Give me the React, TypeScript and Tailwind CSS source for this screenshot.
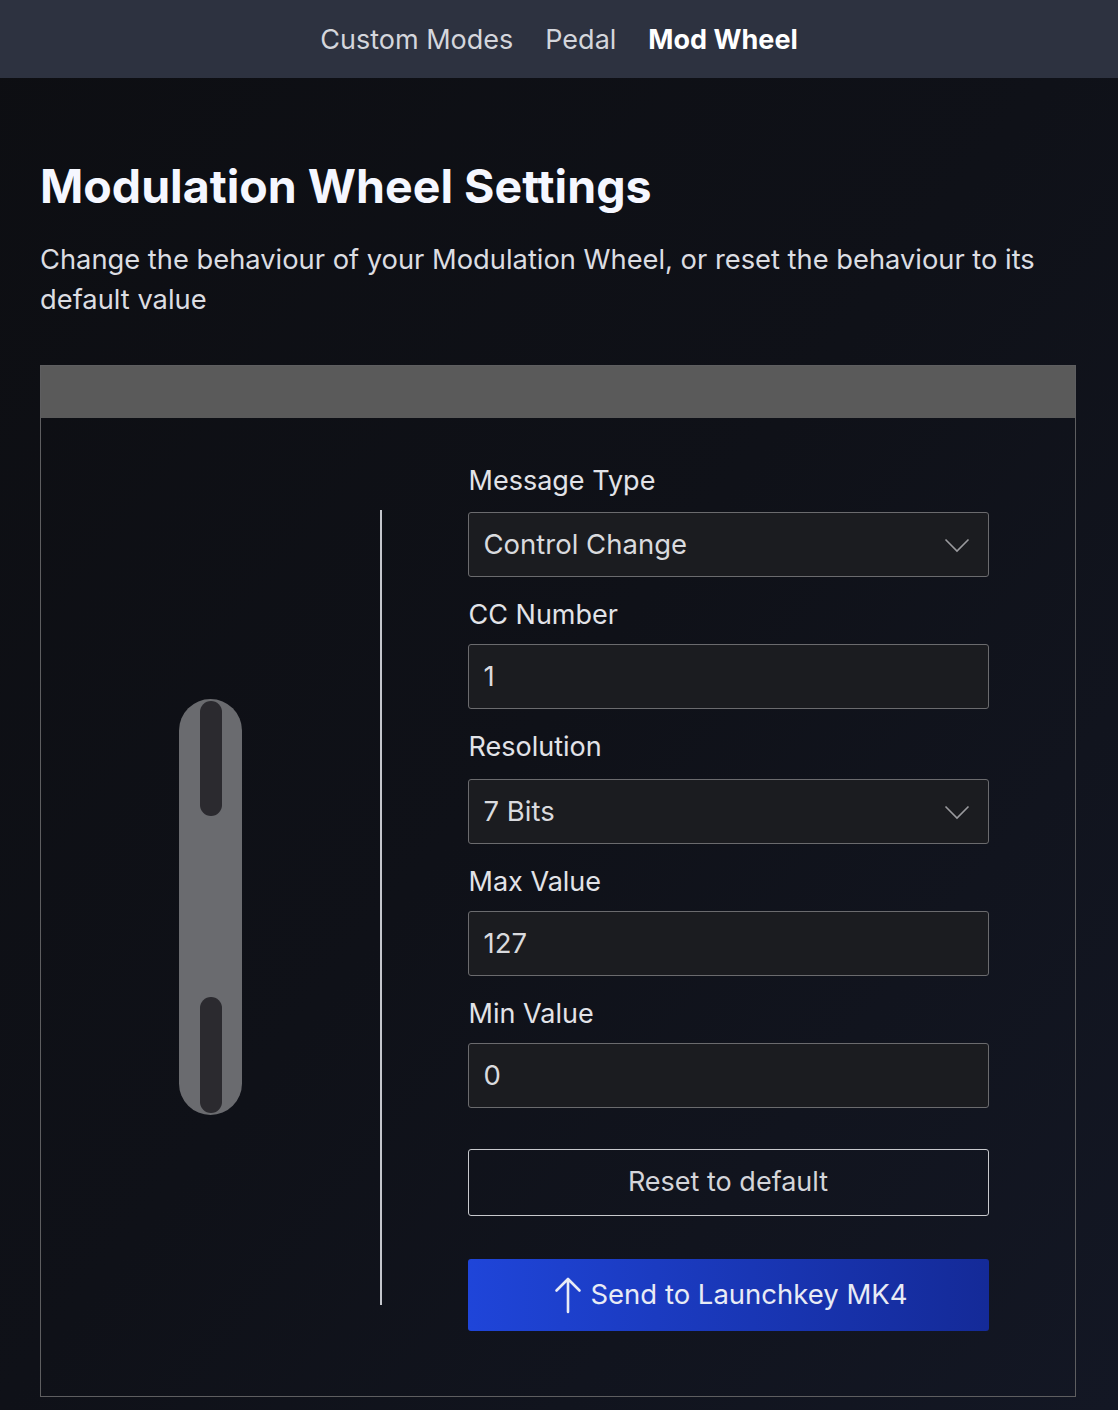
import React from "react";

const Chevron = () => (
  <svg width="26" height="16" viewBox="0 0 26 16" fill="none" stroke="#9a9a9e" strokeWidth="1.6">
    <path d="M1.5 2.5 L13 14 L24.5 2.5" />
  </svg>
);

function Field({ label, value, select, mb }: { label: string; value: string; select?: boolean; mb: string }) {
  return (
    <div className="flex flex-col">
      <div className={"text-[27px] leading-[34px] text-[#e2e3e8] pl-[1px] " + mb}>{label}</div>
      <div className="h-[65px] border border-[#6b6b6e] rounded-[3px] bg-[#1b1c20] flex items-center justify-between pl-[15px] pr-[18px]">
        <span className="text-[27.5px] text-[#d9dade]">{value}</span>
        {select && <Chevron />}
      </div>
    </div>
  );
}

export default function App() {
  return (
    <div
      className="min-h-[1410px] w-full bg-gradient-to-br from-[#0d0e12] via-[#0f1118] to-[#131724]"
      style={{ fontFamily: "Inter, 'Noto Sans', sans-serif" }}
    >
      <nav className="h-[78px] bg-[#2d3240] flex items-center justify-center gap-[32px] text-[27px] pt-[3px]">
        <span className="text-[#d4d6dc]">Custom Modes</span>
        <span className="text-[#d4d6dc]">Pedal</span>
        <span className="text-white font-bold">Mod Wheel</span>
      </nav>

      <div className="pl-[40px] pr-[42px] pt-[78px]">
        <h1 className="text-[46.5px] leading-[60px] font-bold text-[#f5f7ff]">Modulation Wheel Settings</h1>
        <p className="mt-[24px] text-[27.3px] leading-[40px] text-[#dcdde2]">
          Change the behaviour of your Modulation Wheel, or reset the behaviour to its default value
        </p>

        <div className="mt-[45px] border-[1.5px] border-[#5e5e60]">
          <div className="h-[52px] bg-[#5a5a5a]" />
          <div className="flex">
            <div className="w-[339px] flex items-center justify-center">
              <div className="w-[63px] h-[416px] rounded-full bg-[#6a6b6f] flex flex-col items-center justify-between py-[2px]">
                <div className="w-[22px] h-[115px] rounded-full bg-[#2b2a2f]" />
                <div className="w-[22px] h-[116px] rounded-full bg-[#2b2a2f]" />
              </div>
            </div>
            <div className="mt-[92px] mb-[91px] w-[1.5px] bg-[#c4c6cc]" />
            <div className="ml-[86px] w-[521px] flex flex-col gap-[21px] pt-[46px] pb-[65px]">
              <Field label="Message Type" value="Control Change" select mb="mb-[14px]" />
              <Field label="CC Number" value="1" mb="mb-[12px]" />
              <Field label="Resolution" value="7 Bits" select mb="mb-[15px]" />
              <Field label="Max Value" value="127" mb="mb-[12px]" />
              <Field label="Min Value" value="0" mb="mb-[12px]" />
              <button className="mt-[20px] h-[67px] border border-[#c8c9cd] rounded-[3px] text-[27px] text-[#d4d5da]">
                Reset to default
              </button>
              <button className="mt-[22px] h-[72px] rounded-[3px] bg-gradient-to-r from-[#1f45d9] to-[#142a98] flex items-center justify-center gap-[8px] pl-[6px] text-[27.5px] text-[#e8ebf5]">
                <svg width="28" height="38" viewBox="0 0 28 38" fill="none" stroke="#e8ebf5" strokeWidth="2.6" strokeLinecap="round" strokeLinejoin="round">
                  <path d="M14 36 V3 M2.5 14.5 L14 3 L25.5 14.5" />
                </svg>
                <span>Send to Launchkey MK4</span>
              </button>
            </div>
          </div>
        </div>
      </div>
    </div>
  );
}
